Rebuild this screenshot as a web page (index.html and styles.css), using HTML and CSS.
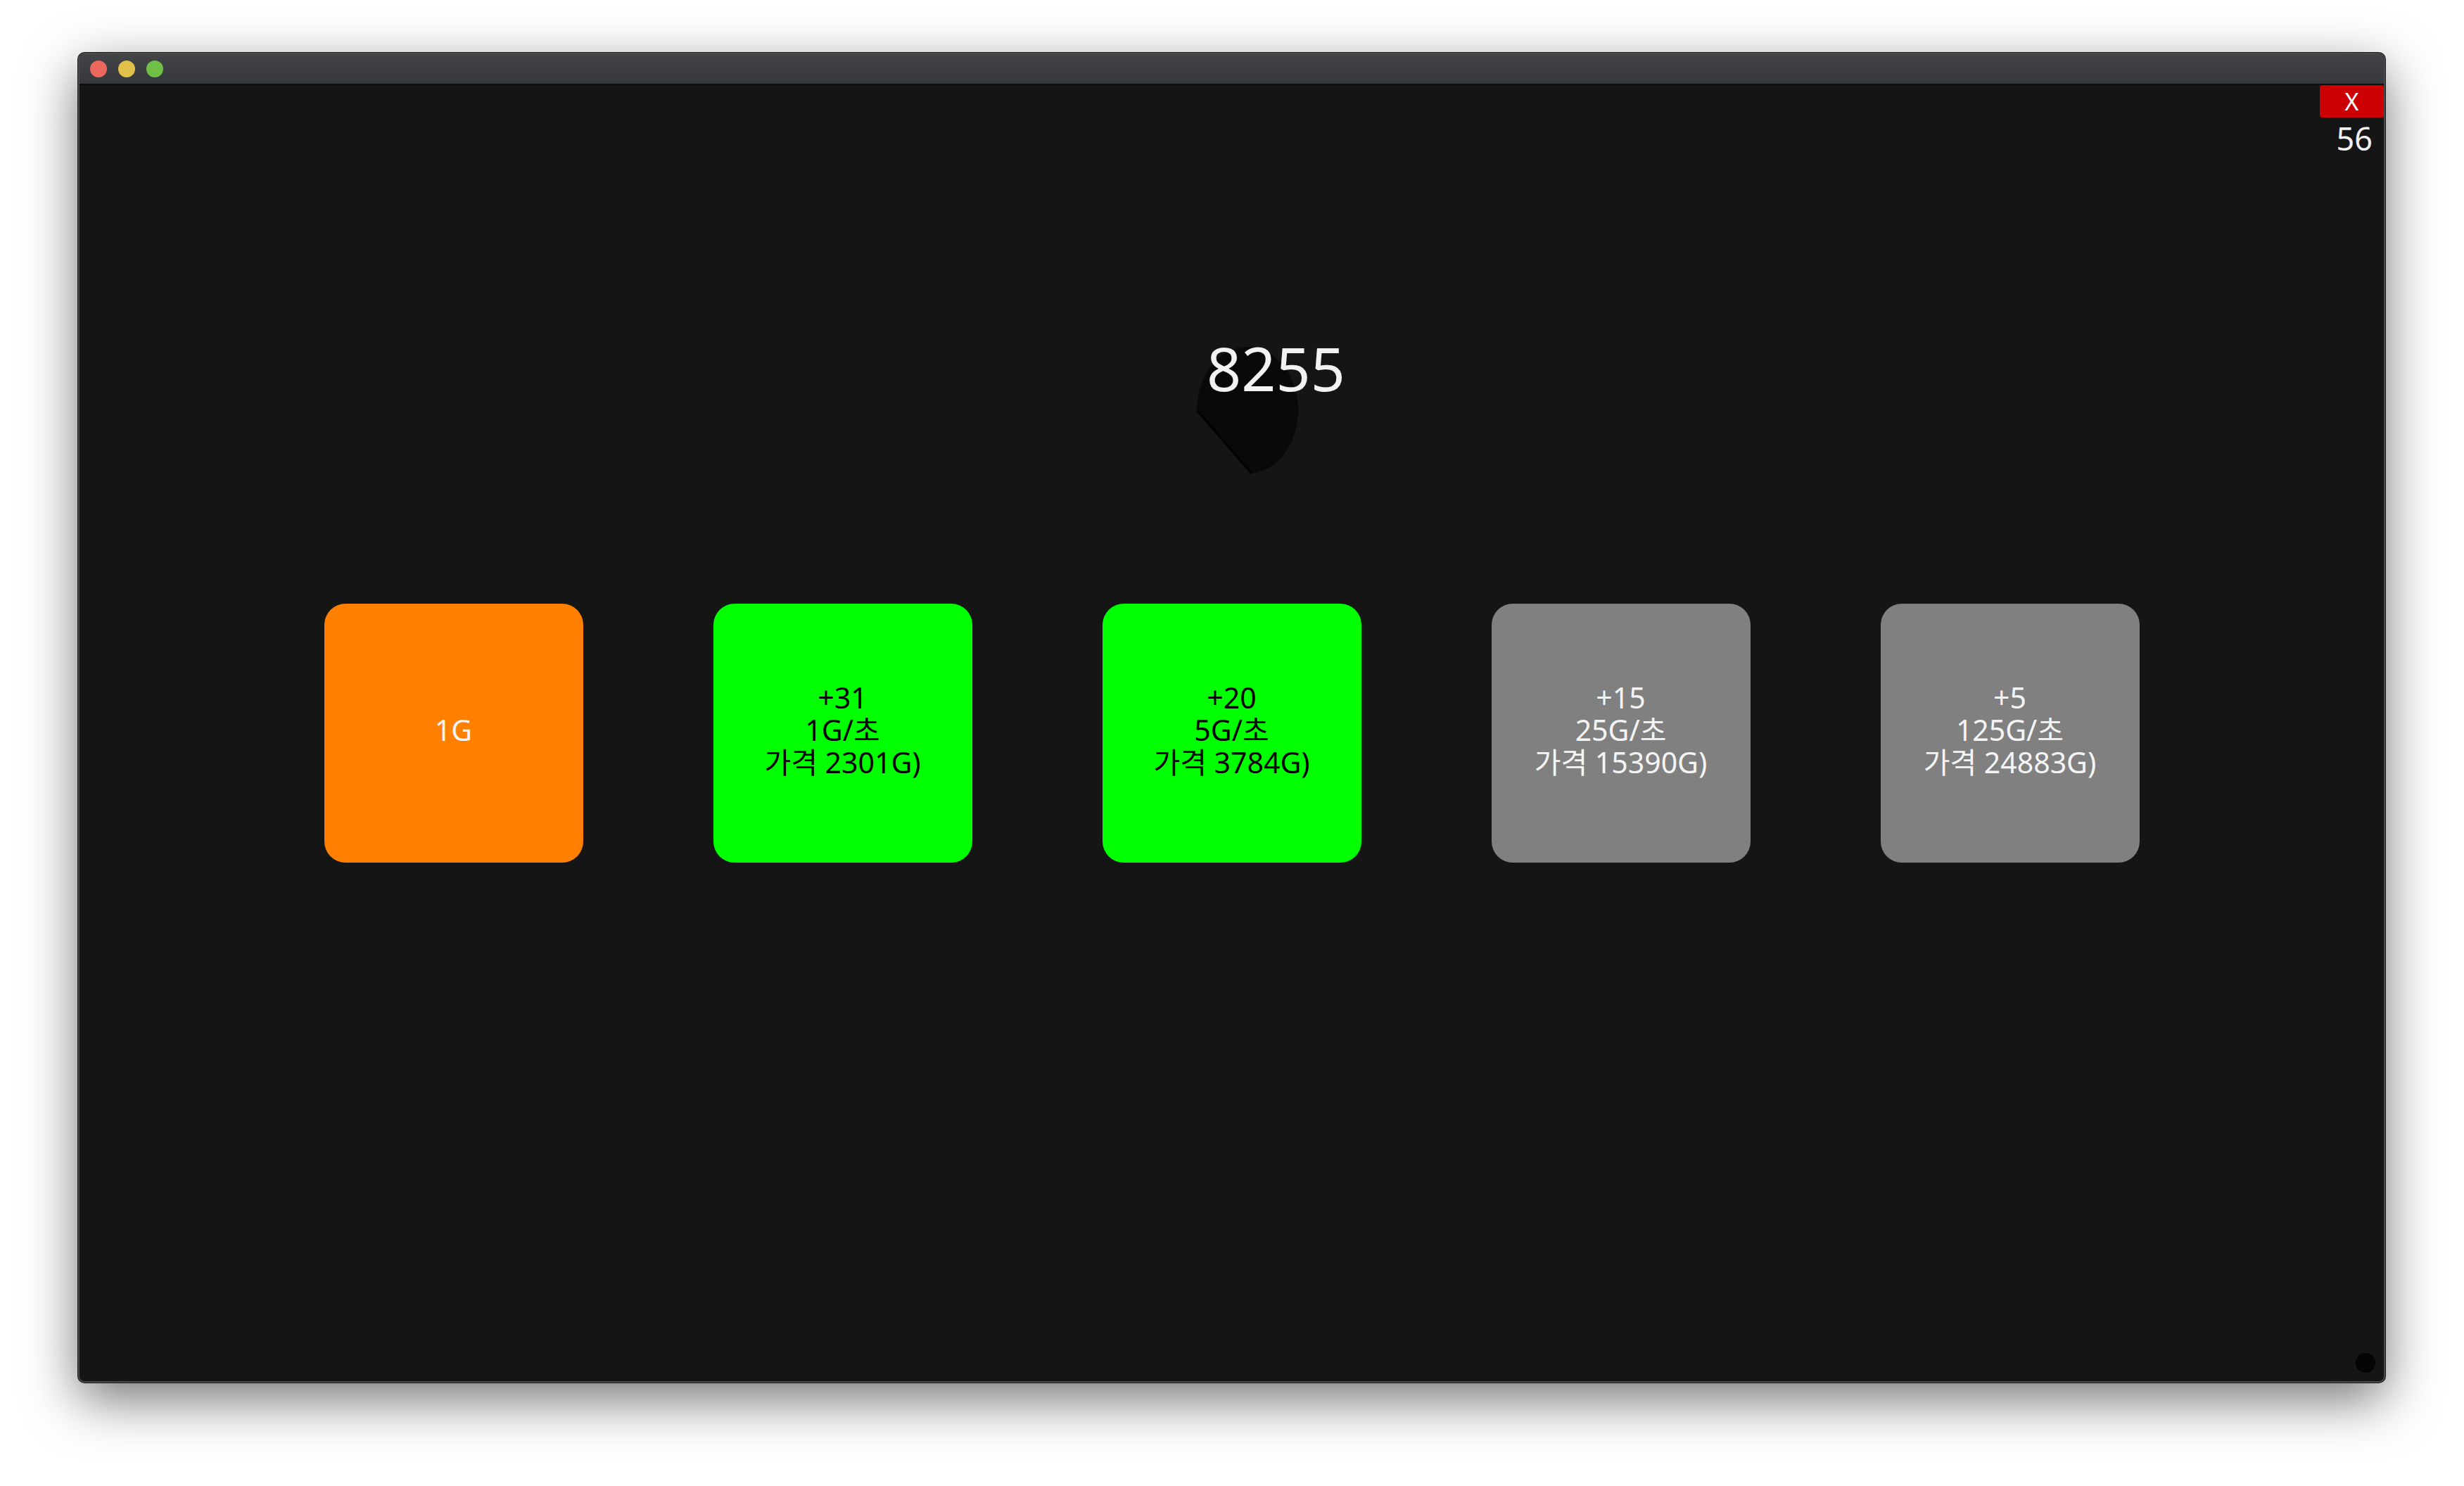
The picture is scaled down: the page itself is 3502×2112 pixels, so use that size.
FILE: index.html
```html
<!DOCTYPE html>
<html lang="ko">
<head>
<meta charset="utf-8">
<title>Clicker</title>
<link rel="stylesheet" href="styles.css">
</head>
<body>
<div class="window">
  <div class="titlebar">
    <span class="light red"></span>
    <span class="light yellow"></span>
    <span class="light green"></span>
  </div>
  <div class="content">
    <button class="close">X</button>
    <div class="fps">56</div>
    <svg class="blob" viewBox="0 0 148 184" width="148" height="184">
      <path d="M 2 92 A 72 90 0 0 1 146 92 A 72 90 0 0 1 80 182 Z" fill="#090909"/>
      <path d="M 2 92 L 80 182" stroke="#020202" stroke-width="3" fill="none"/>
    </svg>
    <div class="score">8255</div>
    <div class="shop">
      <div class="item orange"><span>1G</span></div>
      <div class="item lime"><span>+31<br>1G/초<br>가격 2301G)</span></div>
      <div class="item lime"><span>+20<br>5G/초<br>가격 3784G)</span></div>
      <div class="item gray"><span>+15<br>25G/초<br>가격 15390G)</span></div>
      <div class="item gray"><span>+5<br>125G/초<br>가격 24883G)</span></div>
    </div>
    <span class="dot"></span>
  </div>
</div>
</body>
</html>
```
FILE: styles.css
```css
html, body {
  margin: 0;
  padding: 0;
  background: #ffffff;
}
body {
  width: 3502px;
  height: 2112px;
  overflow: hidden;
  font-family: "Noto Sans", "Noto Sans CJK KR", sans-serif;
}
.window {
  margin: 75px 0 0 111px;
  width: 3279px;
  height: 1890px;
  border-radius: 9px;
  overflow: hidden;
  display: flex;
  flex-direction: column;
  box-shadow: 0 0 0 1px #1a1a1a, 0 24px 75px rgba(0, 0, 0, 0.55);
  border: 2px solid #4a4a4c;
  box-sizing: border-box;
  background: #151515;
}
.titlebar {
  height: 42px;
  flex: none;
  background: linear-gradient(#434447, #36373a);
  border-bottom: 2px solid #0c0c0c;
  display: flex;
  align-items: center;
  gap: 16px;
  padding-left: 15px;
}
.light {
  width: 24px;
  height: 24px;
  border-radius: 50%;
  display: block;
}
.light.red { background: #ec675e; }
.light.yellow { background: #e2c04c; }
.light.green { background: #70bf47; }
.content {
  flex: 1;
  position: relative;
  display: flex;
  flex-direction: column;
  align-items: center;
}
.close {
  position: absolute;
  top: 0;
  right: 0;
  width: 91px;
  height: 46px;
  background: #cc0000;
  color: #ffffff;
  border: none;
  border-radius: 3px;
  font-family: "Noto Sans", sans-serif;
  font-size: 34px;
  line-height: 46px;
  padding: 0;
}
.fps {
  position: absolute;
  top: 46px;
  right: 16px;
  color: #f0f0f0;
  font-size: 45px;
  line-height: 60px;
}
.blob {
  position: absolute;
  left: 1586px;
  top: 370px;
}
.score {
  position: relative;
  margin-top: 352px;
  padding-left: 126px;
  color: #f2f2f2;
  font-size: 86px;
  line-height: 100px;
}
.shop {
  margin-top: 285px;
  display: flex;
  gap: 185px;
}
.item {
  width: 368px;
  height: 368px;
  box-sizing: border-box;
  padding-bottom: 10px;
  border-radius: 30px;
  display: flex;
  align-items: center;
  justify-content: center;
  text-align: center;
  font-size: 41px;
  line-height: 46px;
}
.item.orange { background: #ff8000; color: #f4f4f4; }
.item.lime { background: #00ff00; color: #000000; }
.item.gray { background: #808080; color: #f4f4f4; }
.dot {
  position: absolute;
  right: 12px;
  bottom: 12px;
  width: 28px;
  height: 28px;
  border-radius: 50%;
  background: #050505;
}
```
